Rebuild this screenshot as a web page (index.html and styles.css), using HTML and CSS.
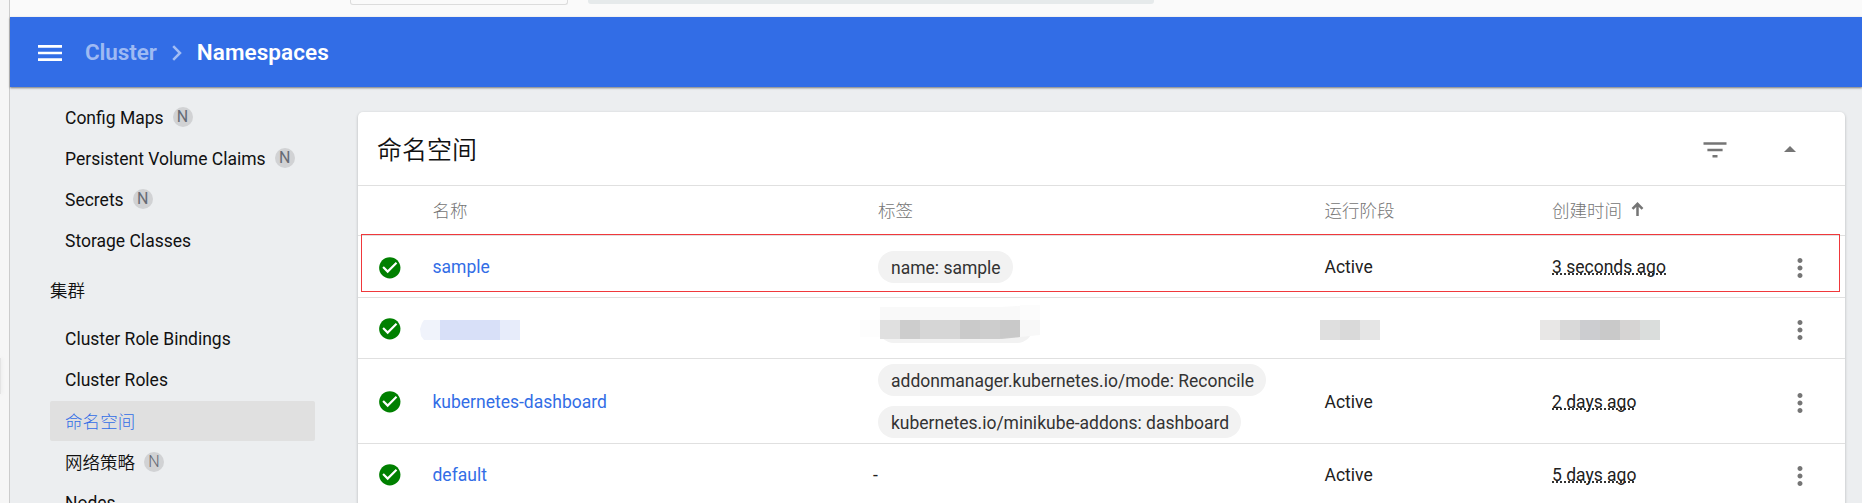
FILE: index.html
```
<!DOCTYPE html>
<html lang="zh-CN">
<head>
<meta charset="utf-8">
<title>Namespaces</title>
<link rel="stylesheet" href="styles.css">
</head>
<body>
<svg class="defs" width="0" height="0">
  <symbol id="check" viewBox="0 0 24 24"><path fill="#008000" d="M12 2C6.480 2 2 6.480 2 12s4.480 10 10 10 10-4.480 10-10S17.520 2 12 2z"/><path fill="#fff" d="M10 17l-5-5 1.410-1.410L10 14.170l7.590-7.590L19 8l-9 9z"/></symbol>
  <symbol id="more" viewBox="0 0 24 24"><path fill="#757575" d="M12 8c1.100 0 2-.9 2-2s-.9-2-2-2-2 .9-2 2 .9 2 2 2zm0 2c-1.100 0-2 .9-2 2s.9 2 2 2 2-.9 2-2-.9-2-2-2zm0 6c-1.100 0-2 .9-2 2s.9 2 2 2 2-.9 2-2-.9-2-2-2z"/></symbol>
</svg>
<div class="frame">
  <div class="gutter"><div class="handle"></div></div>
  <div class="app">
    <div class="top"><div class="select"></div><div class="search"></div></div>
    <header class="toolbar">
      <svg class="menu" viewBox="0 0 24 16"><path fill="#fff" d="M0 0h24v2.700H0zM0 6.650h24v2.700H0zM0 13.300h24V16H0z"/></svg>
      <span class="crumb">Cluster</span>
      <svg class="chev" viewBox="0 0 10 16"><path fill="none" stroke="#fff" stroke-opacity=".55" stroke-width="2.500" d="M1.200 1.200L8 8l-6.800 6.800"/></svg>
      <span class="crumb current">Namespaces</span>
    </header>
    <div class="body">
      <nav class="nav">
        <a class="item">Config Maps<i class="n">N</i></a>
        <a class="item">Persistent Volume Claims<i class="n">N</i></a>
        <a class="item">Secrets<i class="n">N</i></a>
        <a class="item">Storage Classes</a>
        <div class="group">集群</div>
        <a class="item">Cluster Role Bindings</a>
        <a class="item">Cluster Roles</a>
        <a class="item active">命名空间</a>
        <a class="item cjk">网络策略<i class="n">N</i></a>
        <a class="item">Nodes</a>
      </nav>
      <main class="card">
        <div class="head">
          <h1>命名空间</h1>
          <svg class="filter" viewBox="0 0 24 16"><path fill="#757575" d="M.5.300h23v2.500H.5zM4.400 6.700h15.200v2.500H4.400zM9.500 13.100h5v2.500h-5z"/></svg>
          <svg class="caret" viewBox="0 0 12 6"><path fill="#757575" d="M0 6l6-6 6 6z"/></svg>
        </div>
        <div class="row th"><span></span><span>名称</span><span>标签</span><span>运行阶段</span><span class="sort">创建时间<svg class="arrow" viewBox="0 0 12 14"><path fill="none" stroke="#757575" stroke-width="2.500" d="M6 14V2M1 6.800L6 1.800l5 5"/></svg></span></div>
        <div class="row first">
          <svg class="ok"><use href="#check"/></svg><a class="link">sample</a>
          <div class="chips"><span class="chip">name: sample</span></div>
          <span class="cell">Active</span><span class="cell"><u class="ago">3 seconds ago</u></span><svg class="more"><use href="#more"/></svg>
          <div class="highlight"></div>
        </div>
        <div class="row second">
          <svg class="ok"><use href="#check"/></svg>
          <svg class="mosaic name" viewBox="0 0 100 20"><path fill="#f0f3fb" d="M4 0h16v20H4L1 16 0 9 2 3z"/><path fill="#d8e0f8" d="M20 0h60v20H20z"/><path fill="#e7ecfa" d="M80 0h20v20H80z"/></svg>
          <svg class="mosaic tags" viewBox="0 0 180 42"><rect x="18" y="6" width="155" height="32" rx="16" fill="#f2f2f2"/><path fill="#fdfdfd" d="M0 15h20v17H0z"/><path fill="#f9f9f9" d="M20 2h120l20-1v14H20z"/><path fill="#fcfcfc" d="M160 0h20v15h-20z"/><path fill="#f8f8f8" d="M160 15h20v15l-20 2z"/><path fill="#e0e0e0" d="M20 15h20v19H20z"/><path fill="#cdcdcd" d="M40 15h20v19H40z"/><path fill="#d6d6d6" d="M60 15h40v19H60z"/><path fill="#cacaca" d="M100 15h20v19h-20z"/><path fill="#cdcdcd" d="M120 15h40v17l-18 2h-22z"/><path fill="#c9c9c9" d="M140 15h20v17l-18 1h-2z"/></svg>
          <svg class="mosaic phase" viewBox="0 0 60 20"><path fill="#dfdfdf" d="M0 0h20v20H0z"/><path fill="#d9d9d9" d="M20 0h20v20H20z"/><path fill="#e5e5e5" d="M40 0h20v20H40z"/></svg>
          <svg class="mosaic date" viewBox="0 0 120 20"><path fill="#e8e7e6" d="M0 0h20v20H0z"/><path fill="#d9d9d9" d="M20 0h20v20H20z"/><path fill="#cccdd0" d="M40 0h20v20H40z"/><path fill="#c9c9c9" d="M60 0h20v20H60z"/><path fill="#d6d4d3" d="M80 0h20v20H80z"/><path fill="#dadddc" d="M100 0h20v20h-20z"/></svg>
          <svg class="more"><use href="#more"/></svg>
        </div>
        <div class="row third">
          <svg class="ok"><use href="#check"/></svg><a class="link">kubernetes-dashboard</a>
          <div class="chips"><span class="chip">addonmanager.kubernetes.io/mode: Reconcile</span><span class="chip">kubernetes.io/minikube-addons: dashboard</span></div>
          <span class="cell">Active</span><span class="cell"><u class="ago">2 days ago</u></span><svg class="more"><use href="#more"/></svg>
        </div>
        <div class="row fourth">
          <svg class="ok"><use href="#check"/></svg><a class="link">default</a>
          <span class="cell dash">-</span>
          <span class="cell">Active</span><span class="cell"><u class="ago">5 days ago</u></span><svg class="more"><use href="#more"/></svg>
        </div>
      </main>
    </div>
  </div>
</div>
</body>
</html>
```
FILE: styles.css
```
* { box-sizing: border-box; }
html, body { margin: 0; height: 503px; overflow: hidden; }
body { font: 17.5px/20px Roboto, "Noto Sans CJK SC", sans-serif; color: #212121; }
svg { display: block; flex: none; }
.defs { position: absolute; }
.frame { display: flex; height: 503px; overflow: hidden; }
.gutter { width: 10px; flex: none; background: #f6f6f6; border-right: 1px solid #ccc; padding-top: 358px; overflow: hidden; }
.handle { width: 1px; height: 36px; background: #e4e4e4; box-shadow: 0 0 4px rgba(0,0,0,.15); }
.app { flex: 1; min-width: 0; background: #eceef0; display: flex; flex-direction: column; }
.top { flex: none; height: 17px; background: #fafafa; display: flex; padding-left: 340px; gap: 20px; }
.select { width: 218px; height: 5px; border: 1px solid #dcdcdc; border-top: 0; border-radius: 0 0 3px 3px; }
.search { width: 566px; height: 4px; background: #e6eaeb; border-radius: 0 0 3px 3px; }
.toolbar { position: relative; flex: none; height: 70px; background: #326de6; display: flex; align-items: center; padding-left: 28px; box-shadow: 0 1px 2px rgba(0,0,0,.5); }
.menu { width: 24px; height: 16px; margin: 2px 23px 0 0; }
.crumb { font-size: 22.5px; font-weight: 600; line-height: 28px; letter-spacing: -.1px; color: rgba(255,255,255,.55); }
.chev { width: 10px; height: 16px; margin: 2px 15px 0 15px; }
.current { color: #fff; letter-spacing: .08px; }
.body { flex: 1; min-height: 0; display: flex; overflow: hidden; }
.nav { width: 348px; flex: none; padding: 11px 43px 0 40px; color: #111; }
.item { display: flex; align-items: center; height: 40px; margin-bottom: 1px; padding-left: 15px; border-radius: 2px; white-space: nowrap; }
.n { width: 20px; height: 20px; margin: -2px 0 0 9px; border-radius: 50%; background: #d1d2d4; color: #666b74; font-size: 16px; font-style: normal; text-align: center; }
.group { height: 57px; line-height: 59px; font-weight: 350; }
.active { background: #e0e0e0; color: #326de6; font-weight: 300; padding-top: 1px; letter-spacing: .1px; }
.cjk { padding-top: 2px; font-weight: 350; }
.card { width: 1487px; height: 420px; margin-top: 25px; flex: none; background: #fff; border-radius: 5px 5px 0 0; box-shadow: 0 1px 3px rgba(0,0,0,.25); }
.head { display: flex; align-items: center; height: 74px; border-bottom: 1px solid #e0e0e0; padding-left: 19px; }
h1 { margin: 4px 0 0; flex: 1; font-size: 25px; line-height: 30px; font-weight: 350; color: #111; }
.filter { width: 24px; height: 16px; margin: 2px 57px 0 0; }
.caret { width: 12px; height: 6px; margin: 1px 49px 0 0; }
.row { position: relative; display: grid; grid-template-columns: 74.5px 445.5px 446.5px 227.5px 235.5px 1fr; align-items: center; border-bottom: 1px solid #e0e0e0; }
.th { height: 50px; color: #757575; font-weight: 300; padding-top: 1px; }
.sort { display: flex; align-items: center; }
.arrow { width: 13px; height: 14px; margin: -4px 0 0 9px; }
.first { height: 62px; }
.second { height: 61px; }
.third { height: 85px; }
.fourth { height: 61px; }
.ok { width: 25.600px; height: 25.600px; margin: 2px 0 0 18.800px; }
.more { width: 30px; height: 30px; margin: 3px 0 0 -2.500px; }
.link { color: #326de6; padding-top: 1px; }
.cell { padding-top: 1px; }
.fourth .link, .fourth .cell { padding-top: 2px; }
.chips { display: flex; flex-direction: column; align-items: flex-start; gap: 10px; }
.chip { height: 32px; line-height: 34px; padding: 0 12.500px 0 13px; border-radius: 16px; background: #f2f2f2; color: #333; white-space: nowrap; }
.third .chip { padding-right: 12px; }
.ago { text-decoration: none; background: repeating-linear-gradient(90deg, #333 0 2px, transparent 2px 4px) 0 calc(100% - 2px) / 100% 2px no-repeat; }
.dash { margin-left: -5px; }
.highlight { position: absolute; left: 3px; top: -2px; width: 1479px; height: 58px; border: 1px solid #f0383b; }
.name { width: 100px; height: 20px; margin: 3px 0 0 -12.500px; }
.tags { width: 180px; height: 42px; margin: -4px 0 0 -18px; }
.phase { width: 60px; height: 20px; margin: 3px 0 0 -4.500px; }
.date { width: 120px; height: 20px; margin: 3px 0 0 -12px; }
```
